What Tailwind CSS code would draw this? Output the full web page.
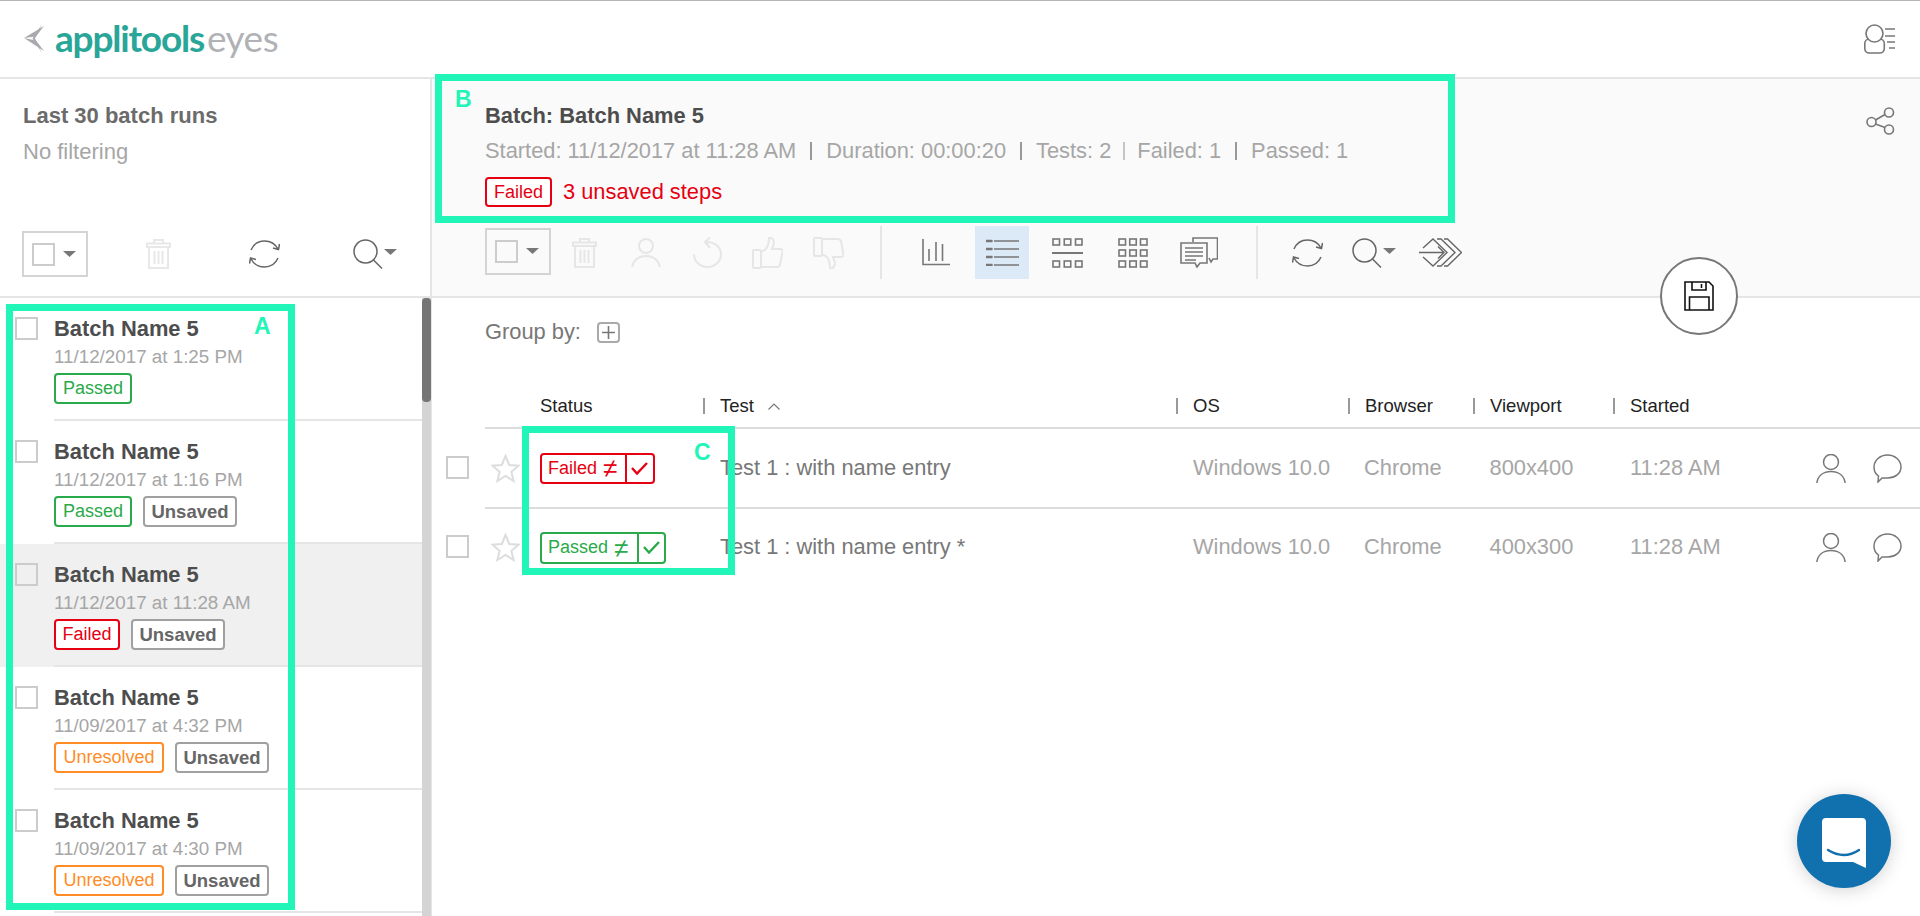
<!DOCTYPE html>
<html lang="en">

<head>
  <meta charset="UTF-8" />
  <title>Applitools Eyes - Batch runs</title>
  <script src="https://cdn.jsdelivr.net/npm/@tailwindcss/browser@4"></script>
</head>

<body class="bg-white font-['Liberation_Sans',sans-serif]">
  <div class="relative w-[1920px] h-[916px] overflow-hidden border-t border-[#b5b5b5] flex flex-col">

    <!-- top bar -->
    <header class="h-[78px] shrink-0 border-b-2 border-[#e5e5e5] flex items-center justify-between pl-[24px] pr-[25px]">
      <div class="flex items-center">
        <svg width="21" height="29" viewBox="0 0 21 29" fill="#a9aaae" class="mt-[-2px]">
          <path d="M0 14 L20 2 L12 12.5 Z" />
          <path d="M0 14 L20 27 L12 16.5 Z" />
          <path d="M18 0 L11 14.5 L18 29 L8.5 14.5 Z" />
        </svg>
        <span class="ml-[10px] mt-[-3px] text-[37px] leading-[40px] font-bold tracking-[-1.2px] text-[#2aa698] font-['Lato',sans-serif]">applitools</span>
        <span class="ml-[3px] mt-[-3px] text-[37px] leading-[40px] tracking-[-0.5px] text-[#b1b2b6] font-['Lato',sans-serif]">eyes</span>
      </div>
      <svg width="31" height="30" viewBox="0 0 31 30" fill="none" stroke="#777" stroke-width="1.6">
        <rect x="0.8" y="15" width="19.5" height="14" rx="4.5" />
        <circle cx="10.5" cy="9.5" r="8.5" fill="#fff" />
        <path d="M21 5 H31 M21 12 H31 M23 18 H31 M25 24 H31" />
      </svg>
    </header>

    <div class="flex flex-1 min-h-0">
      <!-- batch list -->
      <aside class="w-[432px] shrink-0 flex flex-col">
        <div class="h-[219px] shrink-0 border-b-2 border-r-2 border-[#e5e5e5] pl-[22px] flex flex-col">
          <div class="mt-[24px] pl-[1px] text-[22px] leading-[26px] font-bold text-[#6b6b6b]">Last 30 batch runs</div>
          <div class="mt-[10px] pl-[1px] text-[22px] leading-[26px] text-[#a6a6a6]">No filtering</div>
          <div class="mt-[66px] flex items-center">
            <div class="w-[66px] h-[46px] border-2 border-[#d4d4d4] flex items-center pl-[8px]">
              <div class="w-[23px] h-[23px] border-2 border-[#cccccc]"></div>
              <svg width="13" height="6" viewBox="0 0 13 6" class="ml-[8px]"><path d="M0 0 H13 L6.5 6 Z" fill="#777" /></svg>
            </div>
            <svg width="25" height="30" viewBox="0 0 25 30" fill="none" stroke="#e8e8e8" stroke-width="2" class="ml-[58px]">
              <path d="M8 4 V1 H17 V4 M1 8 V4.5 H24 V8 Z M3 8 V29 H22 V8 M8.5 12 V25 M12.5 12 V25 M16.5 12 V25" />
            </svg>
            <svg width="31" height="28" viewBox="0 0 31 28" fill="none" stroke="#666" stroke-width="1.5" class="ml-[78px]">
              <path d="M2 10 C5 3 11 1 15.5 1 C21 1 26 3.5 29 9 M24 8 L29.5 9.5 L30.5 4" />
              <path d="M29 18 C26 25 20 27 15.5 27 C10 27 5 24.5 2 19 M7 19.5 L1.5 18 L0.5 23.5" />
            </svg>
            <svg width="44" height="30" viewBox="0 0 44 30" fill="none" stroke="#666" stroke-width="1.5" class="ml-[73px]">
              <circle cx="12.5" cy="12.5" r="11.5" />
              <path d="M20.5 21 L29 29.5" />
              <path d="M31 10 H44 L37.5 16 Z" fill="#777" stroke="none" />
            </svg>
          </div>
        </div>

        <div class="flex flex-1 min-h-0">
          <ul class="w-[422px] shrink-0">
            <li class="h-[123px] flex">
              <div class="w-[23px] h-[23px] border-2 border-[#cccccc] bg-white ml-[15px] mt-[19px] shrink-0"></div>
              <div class="ml-[16px] flex-1 border-b-2 border-[#e5e5e5] pt-[18px]">
                <div class="text-[21.9px] leading-[26px] font-bold text-[#4d4d4d]">Batch Name 5</div>
                <div class="mt-[3px] text-[18.8px] leading-[24px] text-[#a6a6a6]">11/12/2017 at 1:25 PM</div>
                <div class="mt-[4px] flex gap-[11px]">
                  <span class="w-[78px] h-[31px] border-2 border-[#2aaa4a] rounded-[4px] bg-white flex items-center justify-center text-[18px] text-[#2aaa4a]">Passed</span>
                </div>
              </div>
            </li>
            <li class="h-[123px] flex">
              <div class="w-[23px] h-[23px] border-2 border-[#cccccc] bg-white ml-[15px] mt-[19px] shrink-0"></div>
              <div class="ml-[16px] flex-1 border-b-2 border-[#e5e5e5] pt-[18px]">
                <div class="text-[21.9px] leading-[26px] font-bold text-[#4d4d4d]">Batch Name 5</div>
                <div class="mt-[3px] text-[18.8px] leading-[24px] text-[#a6a6a6]">11/12/2017 at 1:16 PM</div>
                <div class="mt-[4px] flex gap-[11px]">
                  <span class="w-[78px] h-[31px] border-2 border-[#2aaa4a] rounded-[4px] bg-white flex items-center justify-center text-[18px] text-[#2aaa4a]">Passed</span>
                  <span class="w-[94px] h-[31px] border-2 border-[#a0a0a0] rounded-[4px] bg-white flex items-center justify-center text-[18.5px] font-bold text-[#666]">Unsaved</span>
                </div>
              </div>
            </li>
            <li class="h-[123px] flex bg-[#f0f0f0]">
              <div class="w-[23px] h-[23px] border-2 border-[#cccccc] ml-[15px] mt-[19px] shrink-0"></div>
              <div class="ml-[16px] flex-1 border-b-2 border-[#e5e5e5] pt-[18px]">
                <div class="text-[21.9px] leading-[26px] font-bold text-[#4d4d4d]">Batch Name 5</div>
                <div class="mt-[3px] text-[18.8px] leading-[24px] text-[#a6a6a6]">11/12/2017 at 11:28 AM</div>
                <div class="mt-[4px] flex gap-[11px]">
                  <span class="w-[66px] h-[31px] border-2 border-[#e60012] rounded-[4px] bg-white flex items-center justify-center text-[18px] text-[#e60012]">Failed</span>
                  <span class="w-[94px] h-[31px] border-2 border-[#a0a0a0] rounded-[4px] bg-white flex items-center justify-center text-[18.5px] font-bold text-[#666]">Unsaved</span>
                </div>
              </div>
            </li>
            <li class="h-[123px] flex">
              <div class="w-[23px] h-[23px] border-2 border-[#cccccc] bg-white ml-[15px] mt-[19px] shrink-0"></div>
              <div class="ml-[16px] flex-1 border-b-2 border-[#e5e5e5] pt-[18px]">
                <div class="text-[21.9px] leading-[26px] font-bold text-[#4d4d4d]">Batch Name 5</div>
                <div class="mt-[3px] text-[18.8px] leading-[24px] text-[#a6a6a6]">11/09/2017 at 4:32 PM</div>
                <div class="mt-[4px] flex gap-[11px]">
                  <span class="w-[110px] h-[31px] border-2 border-[#ff8c26] rounded-[4px] bg-white flex items-center justify-center text-[18px] text-[#ff8c26]">Unresolved</span>
                  <span class="w-[94px] h-[31px] border-2 border-[#a0a0a0] rounded-[4px] bg-white flex items-center justify-center text-[18.5px] font-bold text-[#666]">Unsaved</span>
                </div>
              </div>
            </li>
            <li class="h-[123px] flex">
              <div class="w-[23px] h-[23px] border-2 border-[#cccccc] bg-white ml-[15px] mt-[19px] shrink-0"></div>
              <div class="ml-[16px] flex-1 border-b-2 border-[#e5e5e5] pt-[18px]">
                <div class="text-[21.9px] leading-[26px] font-bold text-[#4d4d4d]">Batch Name 5</div>
                <div class="mt-[3px] text-[18.8px] leading-[24px] text-[#a6a6a6]">11/09/2017 at 4:30 PM</div>
                <div class="mt-[4px] flex gap-[11px]">
                  <span class="w-[110px] h-[31px] border-2 border-[#ff8c26] rounded-[4px] bg-white flex items-center justify-center text-[18px] text-[#ff8c26]">Unresolved</span>
                  <span class="w-[94px] h-[31px] border-2 border-[#a0a0a0] rounded-[4px] bg-white flex items-center justify-center text-[18.5px] font-bold text-[#666]">Unsaved</span>
                </div>
              </div>
            </li>
          </ul>
          <!-- scrollbar -->
          <div class="w-[9px] shrink-0 bg-[#d4d4d4]">
            <div class="h-[104px] bg-[#757575] rounded-[4px]"></div>
          </div>
          <div class="w-[1px] shrink-0 bg-[#e5e5e5]"></div>
        </div>
      </aside>

      <main class="flex-1 flex flex-col min-w-0">
        <!-- batch summary and toolbar -->
        <div class="h-[219px] shrink-0 bg-[#fafafa] border-b-2 border-[#e5e5e5] pl-[53px] pr-[25px] flex justify-between">
          <div class="flex flex-col pt-[25px]">
            <div class="text-[21.9px] leading-[24px] font-bold text-[#4d4d4d]">Batch: Batch Name 5</div>
            <div class="mt-[11px] h-[24px] flex items-center text-[21.85px] text-[#a6a6a6]">
              <span>Started: 11/12/2017 at 11:28 AM</span>
              <span class="mx-[14px] w-[2px] h-[18px] bg-[#999]"></span>
              <span>Duration: 00:00:20</span>
              <span class="mx-[14px] w-[2px] h-[18px] bg-[#999]"></span>
              <span>Tests: 2</span>
              <span class="mx-[12px] w-[2px] h-[18px] bg-[#c4c4c4]"></span>
              <span>Failed: 1</span>
              <span class="mx-[14px] w-[2px] h-[18px] bg-[#999]"></span>
              <span>Passed: 1</span>
            </div>
            <div class="mt-[14px] h-[30px] flex items-center">
              <span class="w-[67px] h-[30px] border-2 border-[#e60012] rounded-[4px] bg-white flex items-center justify-center text-[18px] text-[#e60012]">Failed</span>
              <span class="ml-[11px] text-[21.85px] text-[#e60012]">3 unsaved steps</span>
            </div>
            <div class="mt-[19px] h-[53px] flex items-center">
              <div class="w-[66px] h-[47px] border-2 border-[#d4d4d4] flex items-center pl-[8px] mb-[3px]">
                <div class="w-[23px] h-[23px] border-2 border-[#cccccc]"></div>
                <svg width="13" height="6" viewBox="0 0 13 6" class="ml-[8px]"><path d="M0 0 H13 L6.5 6 Z" fill="#777" /></svg>
              </div>
              <svg width="25" height="30" viewBox="0 0 25 30" fill="none" stroke="#e6e6e6" stroke-width="2" class="ml-[21px]">
                <path d="M8 4 V1 H17 V4 M1 8 V4.5 H24 V8 Z M3 8 V29 H22 V8 M8.5 12 V25 M12.5 12 V25 M16.5 12 V25" />
              </svg>
              <svg width="30" height="30" viewBox="0 0 30 30" fill="none" stroke="#e6e6e6" stroke-width="2" class="ml-[34px]">
                <circle cx="15" cy="8" r="7" />
                <path d="M1 29 C3 21 9 18 15 18 C21 18 27 21 29 29" />
              </svg>
              <svg width="29" height="31" viewBox="0 0 29 31" fill="none" stroke="#e6e6e6" stroke-width="2" class="ml-[32px]">
                <path d="M13 5 C22 5 28 10 28 17.5 A13.5 12.5 0 0 1 1 17.5" />
                <path d="M17 0.5 L12 5 L17 11" />
              </svg>
              <svg width="31" height="32" viewBox="0 0 31 32" fill="none" stroke="#e6e6e6" stroke-width="2" class="ml-[30px]">
                <rect x="1" y="13" width="8" height="18" rx="1" />
                <path d="M9 15 L14 12 C16 9 17 5 17 1 C20 0 22 3 22 6 L20 12 L28 12 C31 12 31 15 30 17 L28 28 C27 30 26 30 25 30 L9 30" />
              </svg>
              <svg width="31" height="32" viewBox="0 0 31 32" fill="none" stroke="#e6e6e6" stroke-width="2" class="ml-[30px]">
                <g transform="translate(0 32) scale(1 -1)">
                  <rect x="1" y="13" width="8" height="18" rx="1" />
                  <path d="M9 15 L14 12 C16 9 17 5 17 1 C20 0 22 3 22 6 L20 12 L28 12 C31 12 31 15 30 17 L28 28 C27 30 26 30 25 30 L9 30" />
                </g>
              </svg>
              <div class="ml-[36px] w-[2px] h-[53px] bg-[#e5e5e5]"></div>
              <svg width="28" height="27" viewBox="0 0 28 27" fill="none" stroke="#777" stroke-width="1.6" class="ml-[40px]">
                <path d="M1 0 V25.5 H28" />
                <path d="M7 10 V22 M14 3 V22 M20.5 5 V22" />
              </svg>
              <div class="ml-[25px] w-[54px] h-[53px] bg-[#dce9f7] flex items-center justify-center">
                <svg width="33" height="27" viewBox="0 0 33 27" fill="none" stroke="#777" stroke-width="1.6">
                  <path d="M8 2 H33 M8 10 H33 M8 18 H33 M8 26 H33" />
                  <path d="M0.5 2 H5.5 M0.5 10 H5.5 M0.5 18 H5.5 M0.5 26 H5.5" stroke-width="2.6" stroke-linecap="round" />
                </svg>
              </div>
              <svg width="31" height="30" viewBox="0 0 31 30" fill="none" stroke="#777" stroke-width="1.6" class="ml-[23px]">
                <rect x="1" y="1" width="6.5" height="6" /><rect x="12.25" y="1" width="6.5" height="6" /><rect x="23.5" y="1" width="6.5" height="6" />
                <path d="M0 15 H31" stroke-width="2" />
                <rect x="1" y="23" width="6.5" height="6" /><rect x="12.25" y="23" width="6.5" height="6" /><rect x="23.5" y="23" width="6.5" height="6" />
              </svg>
              <svg width="30" height="30" viewBox="0 0 30 30" fill="none" stroke="#777" stroke-width="1.6" class="ml-[35px]">
                <rect x="1" y="1" width="6.5" height="6" /><rect x="11.75" y="1" width="6.5" height="6" /><rect x="22.5" y="1" width="6.5" height="6" />
                <rect x="1" y="12" width="6.5" height="6" /><rect x="11.75" y="12" width="6.5" height="6" /><rect x="22.5" y="12" width="6.5" height="6" />
                <rect x="1" y="23" width="6.5" height="6" /><rect x="11.75" y="23" width="6.5" height="6" /><rect x="22.5" y="23" width="6.5" height="6" />
              </svg>
              <svg width="38" height="31" viewBox="0 0 38 31" fill="none" stroke="#777" stroke-width="1.6" class="ml-[32px]">
                <path d="M13 5 V1 H37.5 V22 H33 L31 25 L29 21" />
                <path d="M1 6 H27 V26 H20 L17 30 L15 26 H1 Z" fill="#fafafa" />
                <path d="M5 11 H23 M5 15 H23 M5 19 H23 M5 23 H16" />
              </svg>
              <div class="ml-[38px] w-[2px] h-[53px] bg-[#e5e5e5]"></div>
              <svg width="31" height="28" viewBox="0 0 31 28" fill="none" stroke="#666" stroke-width="1.5" class="ml-[34px]">
                <path d="M2 10 C5 3 11 1 15.5 1 C21 1 26 3.5 29 9 M24 8 L29.5 9.5 L30.5 4" />
                <path d="M29 18 C26 25 20 27 15.5 27 C10 27 5 24.5 2 19 M7 19.5 L1.5 18 L0.5 23.5" />
              </svg>
              <svg width="44" height="30" viewBox="0 0 44 30" fill="none" stroke="#666" stroke-width="1.5" class="ml-[29px]">
                <circle cx="12.5" cy="12.5" r="11.5" />
                <path d="M20.5 21 L29 29.5" />
                <path d="M31 10 H44 L37.5 16 Z" fill="#777" stroke="none" />
              </svg>
              <svg width="43" height="29" viewBox="0 0 43 29" fill="none" stroke="#666" stroke-width="1.4" class="ml-[23px]">
                <path d="M4 10 L14 1 L28 14.5 L14 28 L4 19" />
                <path d="M18 1 L22 1 L36 14.5 L22 28 L18 28" />
                <path d="M25 1 L28.5 1 L42.5 14.5 L28.5 28 L25 28" />
                <path d="M0 14.5 H25 M19 8.5 L25 14.5 L19 20.5" />
              </svg>
            </div>
          </div>
          <svg width="29" height="28" viewBox="0 0 29 28" fill="none" stroke="#777" stroke-width="1.6" class="mt-[28px] shrink-0">
            <circle cx="5.5" cy="15" r="4.5" /><circle cx="23" cy="5.5" r="4.5" /><circle cx="23" cy="22.5" r="4.5" />
            <path d="M9.5 13 L19 7.5 M9.5 17 L19 20.5" />
          </svg>
        </div>

        <!-- group by -->
        <div class="pl-[53px] pt-[24px] h-[45px] flex items-center shrink-0 text-[21.85px] text-[#777]">
          <span>Group by:</span>
          <span class="ml-[16px] w-[23px] h-[21px] border-2 border-[#aaaaaa] rounded-[4px] flex items-center justify-center">
            <svg width="13" height="13" viewBox="0 0 13 13" fill="none" stroke="#777" stroke-width="1.6"><path d="M6.5 0 V13 M0 6.5 H13" /></svg>
          </span>
        </div>

        <!-- test table -->
        <div class="ml-[53px] pl-[55px] h-[86px] shrink-0 border-b-2 border-[#dddddd] flex items-end pb-[13px] text-[18.5px] leading-[16px] text-[#222]">
          <div class="w-[163px]">Status</div>
          <div class="w-[473px] border-l-2 border-[#999] pl-[15px] flex items-center">Test
            <svg width="12" height="7" viewBox="0 0 12 7" fill="none" stroke="#777" stroke-width="1.2" class="ml-[14px]"><path d="M0.5 6.5 L6 1 L11.5 6.5" /></svg>
          </div>
          <div class="w-[172px] border-l-2 border-[#999] pl-[15px]">OS</div>
          <div class="w-[125px] border-l-2 border-[#999] pl-[15px]">Browser</div>
          <div class="w-[140px] border-l-2 border-[#999] pl-[15px]">Viewport</div>
          <div class="border-l-2 border-[#999] pl-[15px]">Started</div>
        </div>

        <div class="flex h-[80px] shrink-0">
          <div class="w-[23px] h-[23px] border-2 border-[#cccccc] ml-[14px] mt-[27px] shrink-0"></div>
          <div class="ml-[16px] flex-1 border-b-2 border-[#dddddd] flex items-center text-[21.85px] text-[#a6a6a6]">
            <div class="w-[55px] pl-[6px]">
              <svg width="29" height="29" viewBox="0 0 29 29" fill="none" stroke="#dddddd" stroke-width="2"><path d="M14.5 2 L18.2 11 L27.5 11.7 L20.4 17.8 L22.6 27 L14.5 22 L6.4 27 L8.6 17.8 L1.5 11.7 L10.8 11 Z" /></svg>
            </div>
            <div class="w-[180px]">
              <div class="w-[115px] h-[31px] border-2 border-[#e60012] rounded-[4px] flex items-center text-[#e60012]">
                <span class="w-[85px] pl-[6px] h-full flex items-center text-[18px] border-r-2 border-[#e60012] whitespace-nowrap">Failed <span class="ml-[6px] text-[26px] leading-none">≠</span></span>
                <svg width="17" height="13" viewBox="0 0 17 13" fill="none" stroke="#e60012" stroke-width="2.4" class="ml-[4px]"><path d="M1 6 L6 11.5 L16 1" /></svg>
              </div>
            </div>
            <div class="w-[473px] text-[#777] pt-[1px]">Test 1 : with name entry</div>
            <div class="w-[171px] pt-[1px]">Windows 10.0</div>
            <div class="w-[125.5px] pt-[1px]">Chrome</div>
            <div class="w-[140.5px] pt-[1px]">800x400</div>
            <div class="w-[185.5px] pt-[1px]">11:28 AM</div>
            <svg width="30" height="29" viewBox="0 0 30 29" fill="none" stroke="#777" stroke-width="1.5">
              <circle cx="15" cy="8" r="7.5" />
              <path d="M0.8 29 C2 21 8 17.5 15 17.5 C22 17.5 28 21 29.2 29" />
            </svg>
            <svg width="29" height="29" viewBox="0 0 29 29" fill="none" stroke="#777" stroke-width="1.5" class="ml-[27px]">
              <path d="M5 28 L5.5 22 C2.5 20 1 16.5 1 13 C1 6.5 7 1 14.5 1 C22 1 28 6.5 28 13 C28 19.5 22 24 15 24 C12 24 10 24 9 24 Z" />
            </svg>
          </div>
        </div>

        <div class="flex h-[77px] shrink-0">
          <div class="w-[23px] h-[23px] border-2 border-[#cccccc] ml-[14px] mt-[26px] shrink-0"></div>
          <div class="ml-[16px] flex-1 flex items-center text-[21.85px] text-[#a6a6a6]">
            <div class="w-[55px] pl-[6px]">
              <svg width="29" height="29" viewBox="0 0 29 29" fill="none" stroke="#dddddd" stroke-width="2"><path d="M14.5 2 L18.2 11 L27.5 11.7 L20.4 17.8 L22.6 27 L14.5 22 L6.4 27 L8.6 17.8 L1.5 11.7 L10.8 11 Z" /></svg>
            </div>
            <div class="w-[180px]">
              <div class="w-[126px] h-[32px] border-2 border-[#2aaa4a] rounded-[4px] flex items-center text-[#2aaa4a]">
                <span class="w-[97px] pl-[6px] h-full flex items-center text-[18px] border-r-2 border-[#2aaa4a] whitespace-nowrap">Passed <span class="ml-[6px] text-[26px] leading-none">≠</span></span>
                <svg width="17" height="13" viewBox="0 0 17 13" fill="none" stroke="#2aaa4a" stroke-width="2.4" class="ml-[4px]"><path d="M1 6 L6 11.5 L16 1" /></svg>
              </div>
            </div>
            <div class="w-[473px] text-[#777] pb-[1px]">Test 1 : with name entry *</div>
            <div class="w-[171px] pb-[1px]">Windows 10.0</div>
            <div class="w-[125.5px] pb-[1px]">Chrome</div>
            <div class="w-[140.5px] pb-[1px]">400x300</div>
            <div class="w-[185.5px] pb-[1px]">11:28 AM</div>
            <svg width="30" height="29" viewBox="0 0 30 29" fill="none" stroke="#777" stroke-width="1.5">
              <circle cx="15" cy="8" r="7.5" />
              <path d="M0.8 29 C2 21 8 17.5 15 17.5 C22 17.5 28 21 29.2 29" />
            </svg>
            <svg width="29" height="29" viewBox="0 0 29 29" fill="none" stroke="#777" stroke-width="1.5" class="ml-[27px]">
              <path d="M5 28 L5.5 22 C2.5 20 1 16.5 1 13 C1 6.5 7 1 14.5 1 C22 1 28 6.5 28 13 C28 19.5 22 24 15 24 C12 24 10 24 9 24 Z" />
            </svg>
          </div>
        </div>
      </main>
    </div>

    <!-- floating save button -->
    <div class="absolute left-[1660px] top-[256px] w-[78px] h-[78px] rounded-full bg-white border-2 border-[#777] flex items-center justify-center">
      <svg width="30" height="30" viewBox="0 0 30 30" fill="none" stroke="#111" stroke-width="1.6">
        <path d="M1 1 H25 L29 5 V29 H1 Z" />
        <path d="M8 1 V9 H22 V1 M17.5 3 V7 M5.5 29 V16 H25 V29" />
      </svg>
    </div>

    <!-- chat launcher -->
    <div class="absolute left-[1797px] top-[793px] w-[94px] h-[94px] rounded-full bg-[#1170ae] shadow-[0_2px_18px_rgba(0,0,0,0.18)] flex items-center justify-center">
      <svg width="44" height="50" viewBox="0 0 44 50" class="mt-[3px]">
        <path d="M4 0 H40 Q44 0 44 4 V50 L31 44 H4 Q0 44 0 40 V4 Q0 0 4 0 Z" fill="#fff" />
        <path d="M6 32 Q22 42 37 32" fill="none" stroke="#1170ae" stroke-width="2.4" stroke-linecap="round" />
      </svg>
    </div>

    <!-- annotation frames -->
    <div class="absolute left-[6px] top-[303px] w-[289px] h-[606px] border-[7px] border-[#22f5b8] pointer-events-none"></div>
    <div class="absolute left-[254px] top-[312px] text-[23px] leading-[26px] font-bold text-[#22f5b8]">A</div>
    <div class="absolute left-[435px] top-[73px] w-[1020px] h-[149px] border-[7px] border-[#22f5b8] pointer-events-none"></div>
    <div class="absolute left-[455px] top-[85px] text-[23px] leading-[26px] font-bold text-[#22f5b8]">B</div>
    <div class="absolute left-[522px] top-[425px] w-[213px] h-[149px] border-[7px] border-[#22f5b8] pointer-events-none"></div>
    <div class="absolute left-[694px] top-[438px] text-[23px] leading-[26px] font-bold text-[#22f5b8]">C</div>
  </div>
</body>

</html>
